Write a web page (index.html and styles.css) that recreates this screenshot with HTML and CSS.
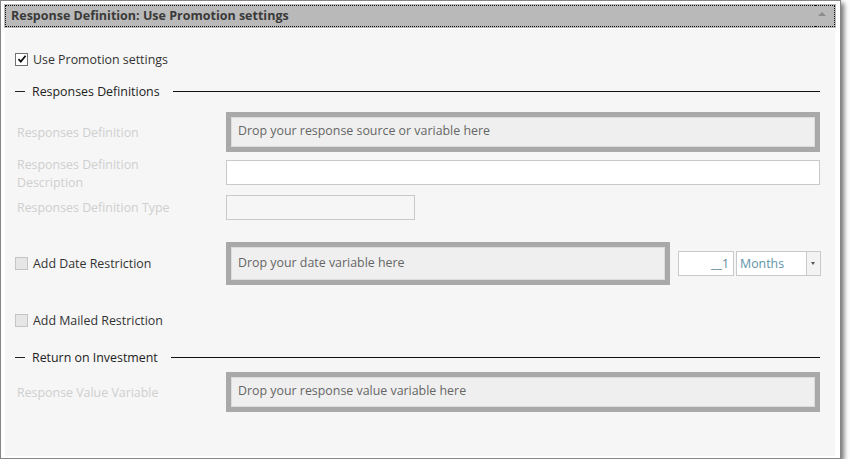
FILE: index.html
```html
<!DOCTYPE html>
<html lang="en">
<head>
  <meta charset="utf-8">
  <title>Response Definition</title>
  <link rel="stylesheet" href="styles.css">
</head>
<body>
  <div class="ventana">
    <div class="cabecera">
      <span class="titulo">Response Definition: Use Promotion settings</span>
      <span class="flecha"></span>
    </div>
    <div class="contenido">
      <label class="check fila-promo">
        <span class="caja marcada">
          <svg width="10" height="10" viewBox="0 0 10 10"><path d="M1.5 5.2 L3.8 7.6 L8.6 1.8" fill="none" stroke="#111" stroke-width="1.8"/></svg>
        </span>
        Use Promotion settings
      </label>

      <div class="seccion sec-resp">
        <span class="guion"></span>
        <span class="sec-texto">Responses Definitions</span>
        <span class="linea"></span>
      </div>

      <div class="fila fila-def">
        <span class="etiqueta">Responses Definition</span>
        <div class="soltar">Drop your response source or variable here</div>
      </div>

      <div class="fila fila-desc">
        <span class="etiqueta doble">Responses Definition<br>Description</span>
        <input class="entrada ancha" type="text">
      </div>

      <div class="fila fila-tipo">
        <span class="etiqueta">Responses Definition Type</span>
        <input class="entrada corta" type="text" disabled>
      </div>

      <div class="fila fila-fecha">
        <label class="check"><span class="caja"></span>Add Date Restriction</label>
        <div class="grupo-fecha">
          <div class="soltar fecha">Drop your date variable here</div>
          <div class="numero">__1</div>
          <div class="selector">
            <span class="selector-texto">Months</span>
            <span class="selector-btn"></span>
          </div>
        </div>
      </div>

      <label class="check fila-mail"><span class="caja"></span>Add Mailed Restriction</label>

      <div class="seccion sec-roi">
        <span class="guion"></span>
        <span class="sec-texto">Return on Investment</span>
        <span class="linea"></span>
      </div>

      <div class="fila fila-valor">
        <span class="etiqueta">Response Value Variable</span>
        <div class="soltar">Drop your response value variable here</div>
      </div>
    </div>
  </div>
</body>
</html>
```
FILE: styles.css
```css
*{
  margin: 0;
  padding: 0;
  box-sizing: border-box;
}

body{
  background: #fff;
  font-family: "Open Sans", "Noto Sans", sans-serif;
  font-size: 12.4px;
  color: #333;
}

.ventana{
  width: 841px;
  height: 459px;
  border: 1px solid #858585;
  background: #fff;
  padding: 3px 4px 2px 3px;
  display: flex;
  flex-direction: column;
  box-shadow: 3px 3px 5px rgba(0,0,0,0.55);
}

.cabecera{
  height: 24px;
  background: #b9b9b9;
  padding: 1px;
  display: flex;
}

.titulo{
  flex: 1;
  border: 1px dotted #111;
  border-right: none;
  padding-left: 5px;
  font-weight: bold;
  font-size: 12.5px;
  color: #3a3a3a;
  line-height: 20px;
}

.flecha{
  width: 20px;
  border: 1px dotted #111;
  border-left: none;
  position: relative;
}

.flecha::after{
  content: "";
  position: absolute;
  left: 3px;
  top: 6px;
  border-left: 4px solid transparent;
  border-right: 4px solid transparent;
  border-bottom: 4px solid #8c8c8c;
}

.contenido{
  flex: 1;
  margin: 1px 1px 0 1px;
  background: #f6f6f6;
  padding: 0 15px 0 10px;
  display: flex;
  flex-direction: column;
}

.check{
  display: flex;
  align-items: center;
  gap: 5px;
  height: 18px;
  color: #333;
}

.caja{
  width: 13px;
  height: 13px;
  border: 1px solid #c4c4c4;
  background: #e6e6e6;
  display: flex;
  align-items: center;
  justify-content: center;
}

.caja.marcada{
  border-color: #707070;
  background: #fff;
}

.fila-promo{ margin-top: 21px; }

.seccion{
  display: flex;
  align-items: center;
  height: 18px;
}

.guion{
  width: 10px;
  border-top: 1px solid #222;
  margin-right: 7px;
}

.sec-texto{
  color: #222;
}

.linea{
  flex: 1;
  border-top: 1px solid #111;
  margin-left: 13px;
}

.sec-resp{ margin-top: 14px; }
.sec-roi{ margin-top: 19px; }

.fila{
  display: grid;
  grid-template-columns: 211px 1fr;
  align-items: center;
}

.etiqueta{
  color: #cfcfcf;
  padding-left: 2px;
}

.etiqueta.doble{
  line-height: 18px;
  padding-top: 4px;
}

.soltar{
  height: 40px;
  border: 5px solid #a9a9a9;
  background: #efefef;
  box-shadow: inset 0 0 0 1px #dcdcdc;
  color: #666;
  padding-left: 7px;
  line-height: 28px;
}

.entrada{
  height: 25px;
  border: 1px solid #c9c9c9;
  background: #fff;
  font: inherit;
  outline: none;
}

.entrada.corta{
  width: 189px;
  background: #f6f6f6;
}

.fila-def{ margin-top: 12px; }
.fila-desc{ margin-top: 0; }
.fila-tipo{ margin-top: 3px; }
.fila-fecha{ margin-top: 22px; }
.fila-mail{ margin-top: 26px; }
.fila-valor{ margin-top: 6px; }

.grupo-fecha{
  display: flex;
  align-items: center;
}

.soltar.fecha{
  width: 444px;
  height: 43px;
  line-height: 31px;
}

.numero{
  width: 56px;
  height: 25px;
  margin-left: 8px;
  background: #fff;
  border: 1px solid #c9c9c9;
  text-align: right;
  padding-right: 4px;
  line-height: 23px;
  color: #5f8797;
}

.selector{
  width: 85px;
  height: 25px;
  margin-left: 2px;
  background: #fff;
  border: 1px solid #c9c9c9;
  display: flex;
}

.selector-texto{
  flex: 1;
  padding-left: 3px;
  line-height: 23px;
  color: #5d93a8;
}

.selector-btn{
  width: 14px;
  border-left: 1px solid #c9c9c9;
  background: #f3f3f3;
  position: relative;
}

.selector-btn::after{
  content: "";
  position: absolute;
  left: 4px;
  top: 10px;
  border-left: 2.5px solid transparent;
  border-right: 2.5px solid transparent;
  border-top: 3px solid #555;
}
```
